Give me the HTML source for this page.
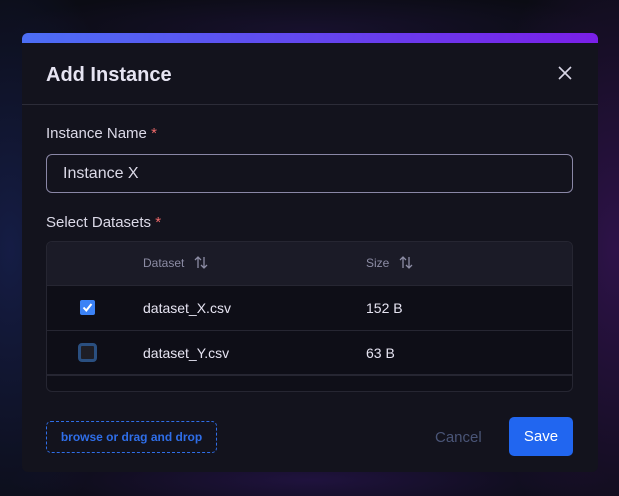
<!DOCTYPE html>
<html><head><style>
*{box-sizing:border-box;margin:0;padding:0}
body{width:619px;height:496px;overflow:hidden;background:#0b0c14;font-family:"Liberation Sans",sans-serif;position:relative}
.glow{position:absolute;inset:0;background:radial-gradient(ellipse 120px 300px at 10px 250px,rgba(40,60,160,.35),transparent),radial-gradient(ellipse 140px 320px at 615px 250px,rgba(110,30,170,.35),transparent),radial-gradient(ellipse 300px 40px at 310px 480px,rgba(70,30,140,.35),transparent),radial-gradient(ellipse 300px 40px at 310px 30px,rgba(60,30,120,.25),transparent)}
.modal{position:absolute;left:22px;top:33px;width:576px;height:439px;background:#13131d;border-radius:6px;overflow:hidden}
.bar{height:10px;background:linear-gradient(90deg,#4c6ef5,#7a1fe8)}
.hd{height:62px;border-bottom:1px solid #2c2c38;position:relative}
.hd h1{position:absolute;left:24px;top:21px;font-size:20px;font-weight:bold;color:#e6e4f2}
.x{position:absolute;right:26px;top:23px}
.lbl{position:absolute;left:24px;font-size:15px;color:#dcdae8}
.lbl span{color:#f06a6a}
.inp{position:absolute;left:24px;top:121px;width:527px;height:39px;border:1px solid #8a87a6;border-radius:6px;color:#dcdae8;font-size:16px;padding:10px 16px}
.tbl{position:absolute;left:24px;top:208px;width:527px;height:151px;border:1px solid #262632;border-radius:6px;overflow:hidden;background:#0f0f18}
.th{height:44px;background:#1b1b27;border-bottom:1px solid #262632;position:relative;color:#8c8ca4;font-size:12px}
.row{height:45px;border-bottom:1px solid #262632;position:relative;color:#e6e4f2;font-size:14px;background:#0e0e17}
.c1{position:absolute;left:96px;top:14px}
.c2{position:absolute;left:319px;top:14px}
.th .c1,.th .c2{top:14px}
.cb{position:absolute;left:33px;top:14px;width:15px;height:15px;border-radius:2px}
.btn{position:absolute;left:24px;top:388px;width:171px;height:32px;border:1px dashed #2f6ee8;border-radius:5px;color:#2f6ee8;font-size:12px;font-weight:bold;text-align:center;line-height:30px}
.cancel{position:absolute;left:413px;top:396px;color:#4a5577;font-size:15px}
.save{position:absolute;left:487px;top:384px;width:64px;height:39px;background:#2166f0;border-radius:5px;color:#fff;font-size:15px;text-align:center;line-height:40px}
</style></head><body>
<div class="glow"></div>
<div class="modal">
<div class="bar"></div>
<div class="hd"><h1>Add Instance</h1>
<svg class="x" width="14" height="14" viewBox="0 0 14 14"><path d="M1 1L13 13M13 1L1 13" stroke="#d8d6e6" stroke-width="1.6"/></svg></div>
<div class="lbl" style="top:92px">Instance Name <span>*</span></div>
<div class="inp">Instance X</div>
<div class="lbl" style="top:181px">Select Datasets <span>*</span></div>
<div class="tbl">
<div class="th"><span class="c1">Dataset <svg width="14" height="13" viewBox="0 0 14 13" style="vertical-align:-2px;margin-left:6px"><path d="M4 12V1M1 4L4 1L7 4M10 1V12M7 9L10 12L13 9" stroke="#8c8ca4" stroke-width="1.3" fill="none"/></svg></span><span class="c2">Size <svg width="14" height="13" viewBox="0 0 14 13" style="vertical-align:-2px;margin-left:6px"><path d="M4 12V1M1 4L4 1L7 4M10 1V12M7 9L10 12L13 9" stroke="#8c8ca4" stroke-width="1.3" fill="none"/></svg></span></div>
<div class="row"><div class="cb" style="background:#3b82f6"><svg width="15" height="15" viewBox="0 0 15 15"><path d="M3.5 7.5L6.3 10.5L11.5 4" stroke="#fff" stroke-width="2" fill="none"/></svg></div><span class="c1">dataset_X.csv</span><span class="c2">152 B</span></div>
<div class="row" style="border-bottom:2px solid #262632"><div class="cb" style="left:31px;top:12px;width:19px;height:19px;border:3px solid #2a4f80;background:#1e1e26;border-radius:4px"></div><span class="c1">dataset_Y.csv</span><span class="c2">63 B</span></div>
</div>
<div class="btn">browse or drag and drop</div>
<div class="cancel">Cancel</div>
<div class="save">Save</div>
</div>
</body></html>
